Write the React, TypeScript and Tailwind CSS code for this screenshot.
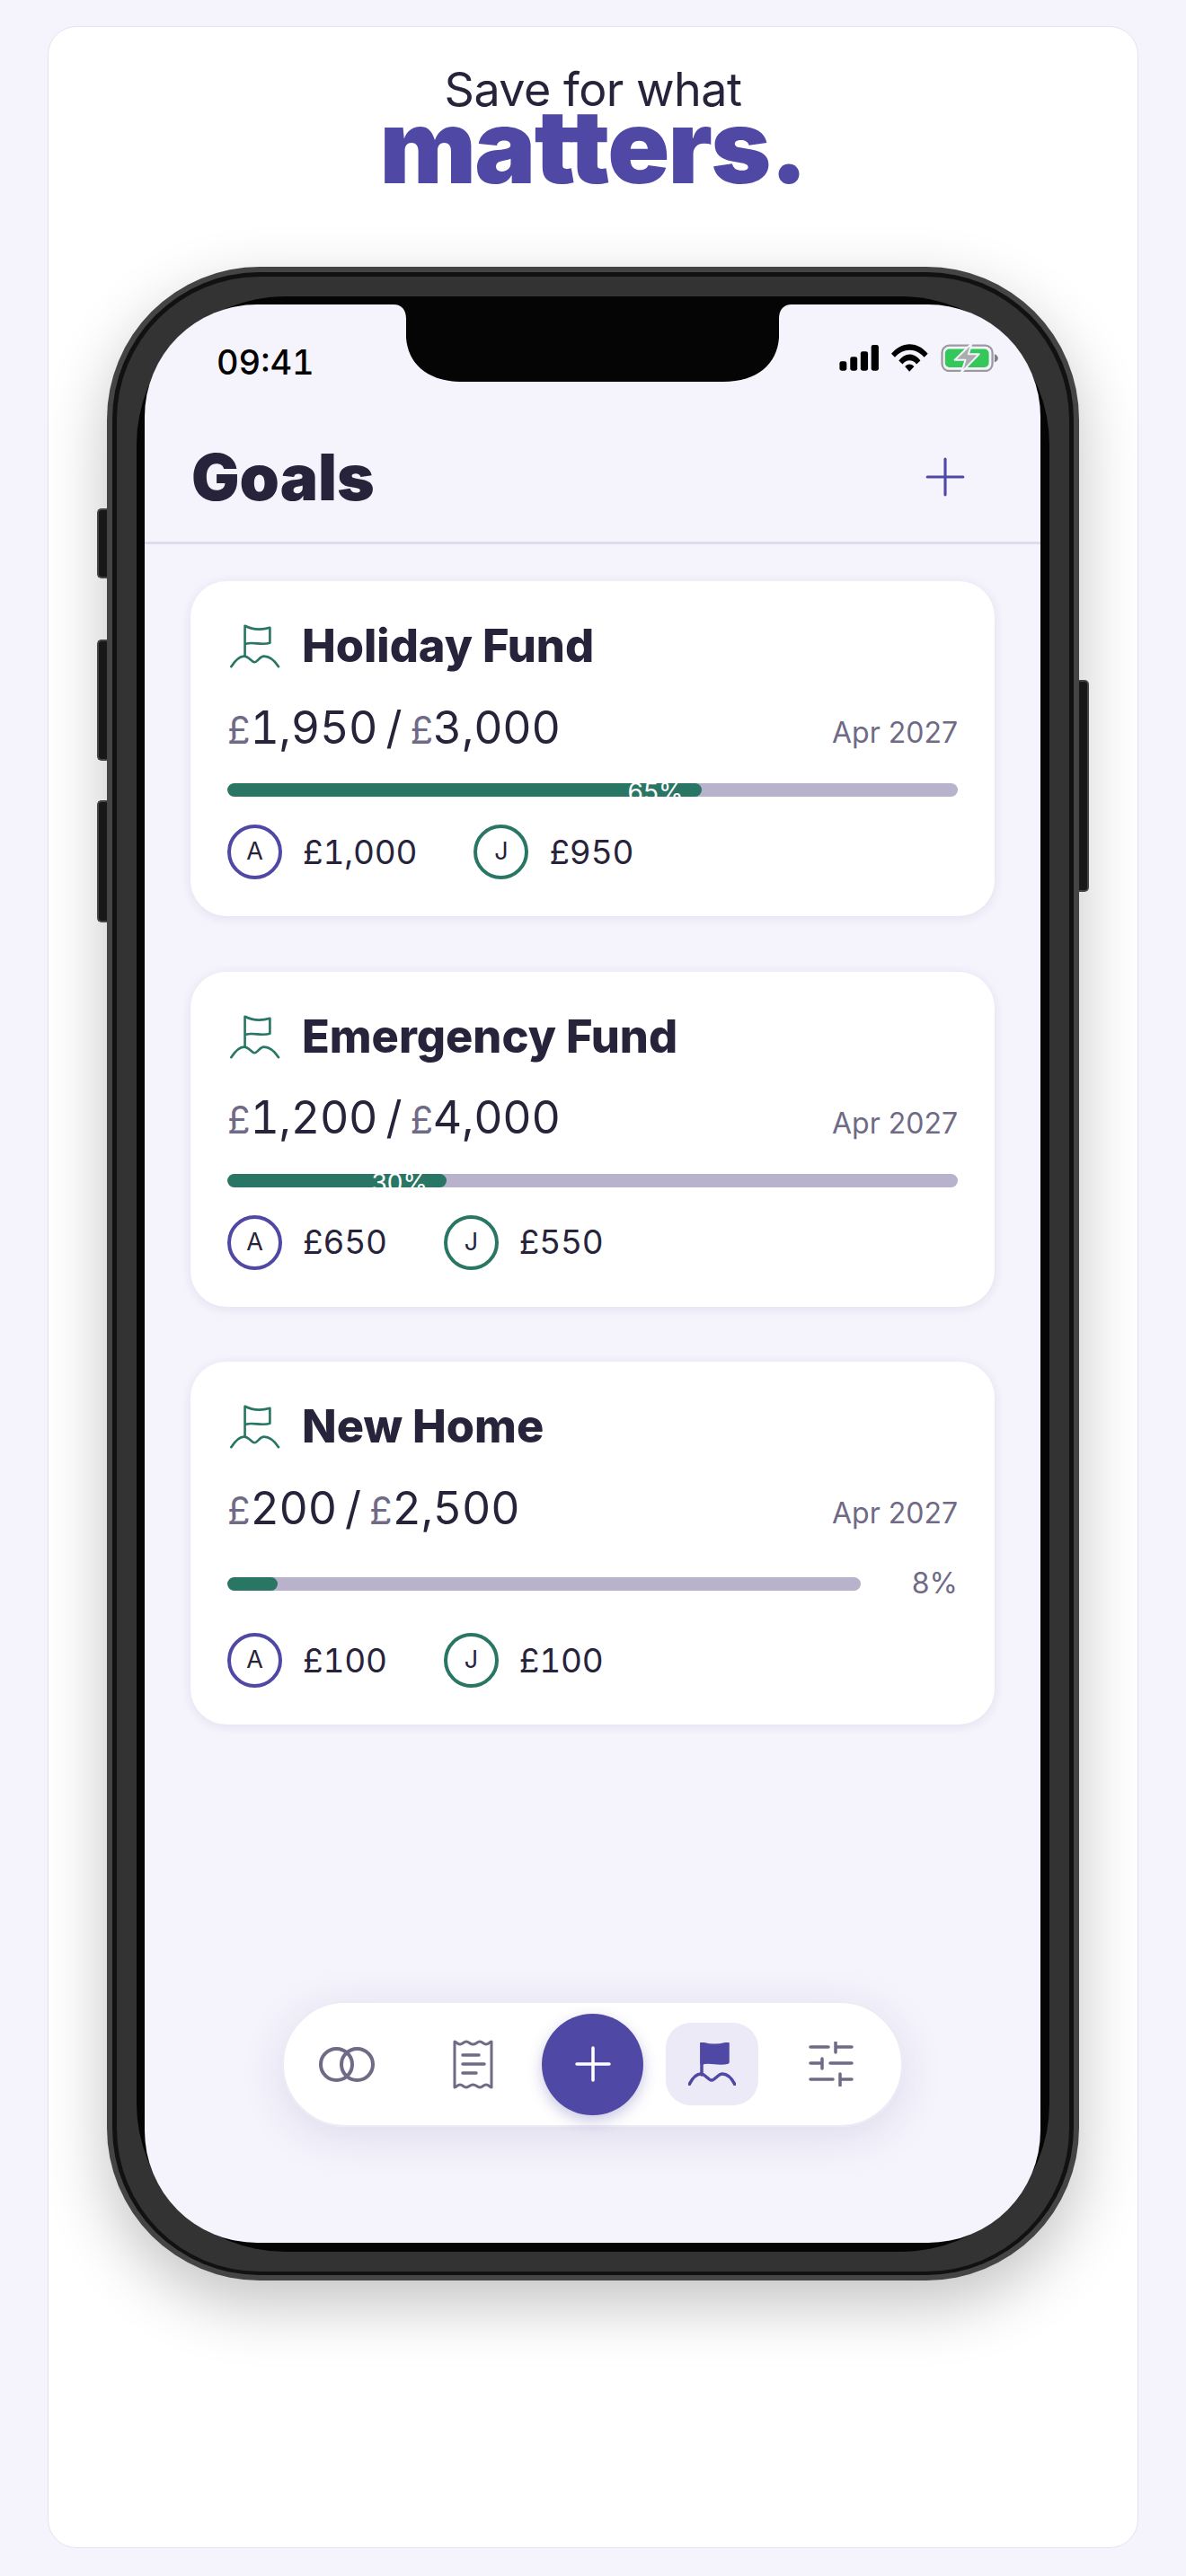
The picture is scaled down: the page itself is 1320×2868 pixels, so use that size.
import { Plus } from "lucide-react";

const goals = [
  { name: "Holiday Fund", saved: "1,950", target: "3,000", pct: 65, a: "£1,000", j: "£950", inside: true },
  { name: "Emergency Fund", saved: "1,200", target: "4,000", pct: 30, a: "£650", j: "£550", inside: true },
  { name: "New Home", saved: "200", target: "2,500", pct: 8, a: "£100", j: "£100", inside: false },
];

function FlagHill() {
  return (
    <svg viewBox="165 190 172 150" className="ml-[2px] w-[57px] h-[50px] shrink-0" fill="none" stroke="#2A7665" strokeWidth="8" strokeLinecap="round" strokeLinejoin="round">
      <path d="M218 298V198C245 212 275 212 302 204V255C275 265 245 250 222 258" />
      <path d="M172 335C185 315 200 300 215 300C232 300 240 320 250 320C260 320 268 300 282 300C300 300 318 315 331 335" />
    </svg>
  );
}

function Avatar({ letter, color, amount }: { letter: string; color: string; amount: string }) {
  return (
    <div className="flex items-center gap-[23px]">
      <div className={`w-[61px] h-[61px] rounded-full border-[4px] flex items-center justify-center text-[27px] text-[#27233A] ${color}`}>{letter}</div>
      <span className="text-[37px] leading-[44px] tabular-nums tracking-[-0.005em] text-[#27233A]">{amount}</span>
    </div>
  );
}

function GoalCard({ goal }: { goal: (typeof goals)[number] }) {
  return (
    <div className="rounded-[40px] bg-white pt-[42px] pb-[41px] px-[41px] shadow-[0_2px_12px_rgba(40,35,90,0.1)]">
      <div className="flex items-center gap-[24px] h-[60px]">
        <FlagHill />
        <span className="text-[50.500px] leading-[60px] font-extrabold text-[#27233A]">{goal.name}</span>
      </div>
      <div className="mt-[32px] flex items-center justify-between h-[60px]">
        <div className="text-[50px] leading-[60px] tabular-nums tracking-[-0.005em] [word-spacing:-4px] text-[#27233A]">
          <span className="text-[42px] text-[#6F6A85]">£</span>{goal.saved} / <span className="text-[42px] text-[#6F6A85]">£</span>{goal.target}
        </div>
        <span className="text-[32px] text-[#6F6A85] mt-[10px]">Apr 2027</span>
      </div>
      {goal.inside ? (
        <div className="mt-[31px] h-[15px] rounded-full bg-[#B8B2CC] overflow-hidden">
          <div className="h-full rounded-full bg-[#2A7665] flex justify-end pr-[21px] overflow-hidden" style={{ width: `${goal.pct}%` }}>
            <span className="text-[28px] leading-[20px] text-white">{goal.pct}%</span>
          </div>
        </div>
      ) : (
        <div className="mt-[31px] h-[44px] flex items-center justify-between">
          <div className="w-[705px] h-[15px] rounded-full bg-[#B8B2CC] overflow-hidden">
            <div className="h-full rounded-full bg-[#2A7665]" style={{ width: `${goal.pct}%` }} />
          </div>
          <span className="text-[32px] text-[#6F6A85]">{goal.pct}%</span>
        </div>
      )}
      <div className={`flex gap-[63px] ${goal.inside ? "mt-[31px]" : "mt-[33px]"}`}>
        <Avatar letter="A" color="border-[#5048A5]" amount={goal.a} />
        <Avatar letter="J" color="border-[#2A7665]" amount={goal.j} />
      </div>
    </div>
  );
}

function StatusIcons() {
  return (
    <div className="flex items-center gap-[14px]">
      <svg viewBox="100 143 133 88" className="w-[44px] h-[29px]" fill="#000">
        <rect x="101" y="198" width="24" height="32" rx="7" />
        <rect x="137" y="183" width="24" height="47" rx="7" />
        <rect x="172" y="165" width="25" height="65" rx="7" />
        <rect x="208" y="143" width="25" height="87" rx="7" />
      </svg>
      <svg viewBox="275 138 124 92" className="w-[41px] h-[31px]" fill="#000">
        <path d="M275 170C310 127 363 127 398 170L386 182C358 149 315 149 287 182Z" />
        <path d="M300 193C322 165 351 165 373 193L360 205C346 188 327 188 313 205Z" />
        <path d="M321 213C331 203 342 203 352 213L336 230Z" />
      </svg>
      <svg viewBox="442 138 194 94" className="w-[65px] h-[31px]" fill="none">
        <rect x="445" y="143" width="170" height="86" rx="24" stroke="#9A9A9F" strokeWidth="7" />
        <rect x="455" y="155" width="148" height="62" rx="15" fill="#34C759" />
        <path d="M622 172C630 175 634 180 634 186C634 192 630 197 622 200Z" fill="#7E7E83" />
        <path d="M545 136L488 192H524L510 234L570 172H534Z" fill="#ABABB0" stroke="#F5F4FD" strokeWidth="6" strokeLinejoin="round" />
      </svg>
    </div>
  );
}

function BottomNav() {
  return (
    <div className="absolute left-[153px] top-[1889px] w-[691px] h-[140px] rounded-full bg-white/95 border-2 border-[#ECEAF4] shadow-[0_10px_50px_rgba(40,35,90,0.12)] flex items-center pl-[39px]">
      <svg viewBox="0 0 62 39" className="w-[62px] h-[39px]" fill="none" stroke="#6F6A85" strokeWidth="4">
        <circle cx="19.5" cy="19.5" r="17.5" />
        <circle cx="42.5" cy="19.5" r="17.5" />
      </svg>
      <svg viewBox="0 0 45 55" className="ml-[87px] w-[45px] h-[55px]" fill="none" stroke="#6F6A85" strokeWidth="3" strokeLinecap="round" strokeLinejoin="round">
        <path d="M2 2V53C4 53 5 50 8 50C11 50 12 53 15 53C18 53 19 50 22.500 50C26 50 27 53 30 53C33 53 34 50 37 50C40 50 41 53 43 53V2C41 2 40 5 37 5C34 5 33 2 30 2C27 2 26 5 22.500 5C19 5 18 2 15 2C12 2 11 5 8 5C5 5 4 2 2 2Z" />
        <path d="M11 17H29M11 27H35M11 37H26" strokeWidth="3.500" />
      </svg>
      <div className="ml-[54px] w-[113px] h-[113px] rounded-full bg-[#5048A5] flex items-center justify-center shadow-[0_6px_16px_rgba(80,72,165,0.3)]">
        <svg viewBox="0 0 40 40" className="w-[40px] h-[40px]" stroke="#fff" strokeWidth="3.500" strokeLinecap="round">
          <path d="M20 2V38M2 20H38" />
        </svg>
      </div>
      <div className="ml-[25px] w-[103px] h-[92px] rounded-[28px] bg-[#ECEAF6] flex items-center justify-center">
        <svg viewBox="0 0 53 48" className="w-[53px] h-[48px]" fill="none" stroke="#5048A5" strokeWidth="3.500" strokeLinecap="round" strokeLinejoin="round">
          <path d="M15 1C24 4 34 4 44 1V22C34 25 24 20 15 23Z" fill="#5048A5" />
          <path d="M15 1V36" />
          <path d="M1 47C5 39 10 35 14 35C19 35 22 42 26 42C30 42 33 35 38 35C43 35 48 39 52 47" />
        </svg>
      </div>
      <svg viewBox="0 0 50 50" className="ml-[56px] w-[50px] h-[50px]" fill="none" stroke="#6F6A85" strokeWidth="3.500" strokeLinecap="round">
        <path d="M2 6H22M30 1V12M30 6H48M2 24H15M15 19V30M24 24H48M2 42H27M35 36V49M35 42H48" />
      </svg>
    </div>
  );
}

export default function App() {
  return (
    <div className="min-h-[2868px] bg-[#F5F4FD] px-[53px] pt-[29px] [font-family:Inter,sans-serif]">
      <div className="h-[2808px] rounded-[32px] bg-white border border-[#E4E2F0] flex flex-col items-center">
        <div className="mt-[40px] text-[52px] leading-[60px] text-[#27233A] tracking-[-0.01em]">Save for what</div>
        <div className="mt-[-23px] text-[114px] leading-[112px] font-black text-[#5048A5] tracking-[-0.015em]">matters.</div>

        {/* phone */}
        <div className="relative mt-[78px] w-[1082px] h-[2242px] rounded-[170px] bg-[#444] p-[6px] shadow-[0_26px_70px_rgba(0,0,0,0.24)]">
          <div className="absolute left-[-11px] top-[269px] w-[11px] h-[78px] rounded-l-[5px] bg-[#181818] border-y-2 border-l-2 border-[#444]" />
          <div className="absolute left-[-11px] top-[415px] w-[11px] h-[135px] rounded-l-[5px] bg-[#181818] border-y-2 border-l-2 border-[#444]" />
          <div className="absolute left-[-11px] top-[594px] w-[11px] h-[136px] rounded-l-[5px] bg-[#181818] border-y-2 border-l-2 border-[#444]" />
          <div className="absolute right-[-11px] top-[460px] w-[11px] h-[236px] rounded-r-[5px] bg-[#181818] border-y-2 border-r-2 border-[#444]" />

          <div className="h-full rounded-[164px] bg-[#111] px-[5px] pt-[5px] pb-[4px]">
            <div className="h-full rounded-[159px] bg-[#333] px-[22px] pt-[22px] pb-[22px]">
              <div className="h-full rounded-[165px] bg-[#050505] pt-[9px] pb-[10px] pl-[9px] pr-[10px]">
                <div className="relative h-full rounded-[125px] bg-[#F5F4FD] overflow-hidden">
                  <svg viewBox="0 0 443 86" className="absolute left-[277px] top-0 w-[443px] h-[86px]" fill="#050505">
                    <path d="M0 0C9 0 14 6 14 16V37C16 66 38 86 76 86H367C405 86 427 66 429 37V16C429 6 434 0 443 0Z" />
                  </svg>

                  <div className="h-[101px] pt-[44px] pl-[80px] pr-[46px] flex items-start justify-between">
                    <span className="text-[38px] leading-[40px] font-medium tabular-nums text-black">09:41</span>
                    <StatusIcons />
                  </div>

                  <div className="h-[166px] pl-[52px] pr-[48px] pt-[53px] border-b-[3px] border-[#DEDCEB] flex items-start justify-between">
                    <h1 className="text-[71px] leading-[76px] font-black text-[#27233A]">Goals</h1>
                    <Plus size={68} strokeWidth={1.1} className="text-[#5048A5] mt-[4px] mr-[24px]" />
                  </div>

                  <div className="px-[51px] pt-[41px] flex flex-col gap-[61.5px]">
                    {goals.map((g) => (
                      <GoalCard key={g.name} goal={g} />
                    ))}
                  </div>

                  <BottomNav />
                </div>
              </div>
            </div>
          </div>
        </div>
      </div>
    </div>
  );
}
